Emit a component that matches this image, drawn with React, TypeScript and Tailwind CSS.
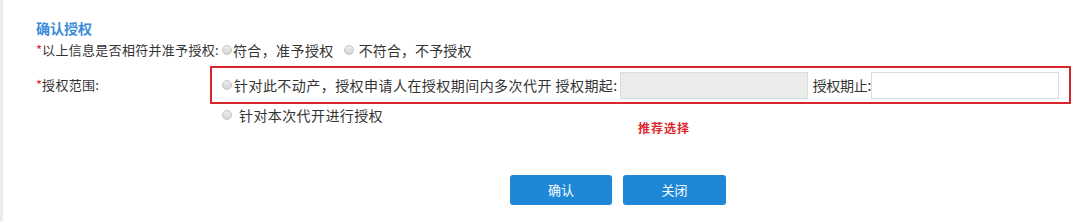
import React from 'react';

const Radio: React.FC<{ className?: string }> = ({ className = '' }) => (
  <span
    className={`inline-block w-[10px] h-[10px] rounded-full border border-[#c4c4c4] bg-gradient-to-b from-[#eeeeee] to-[#d6d6d6] shrink-0 ${className}`}
  />
);

const App: React.FC = () => {
  return (
    <div
      className="w-[1080px] h-[221px] bg-white border-l-[3px] border-[#ececec] text-[#333] overflow-hidden"
      style={{ fontFamily: '"Noto Sans CJK SC", "Noto Sans", sans-serif' }}
    >
      <div className="pl-[33px] pt-[18px]">
        {/* 标题 */}
        <div className="h-[20px] leading-[20px] text-[14px] font-bold text-[#3b8bd8]">确认授权</div>

        {/* 是否相符 */}
        <div className="mt-[2px] h-[20px] flex items-center text-[13px]">
          <span className="text-[#e0262d]">*</span>
          <span className="tracking-[0.3px]">以上信息是否相符并准予授权:</span>
          <Radio className="ml-[3px]" />
          <span className="ml-[1px] text-[14px] tracking-[0.4px]">符合，准予授权</span>
          <Radio className="ml-[10px]" />
          <span className="ml-[5px] text-[14px] tracking-[0.1px]">不符合，不予授权</span>
        </div>

        {/* 授权范围 */}
        <div className="mt-[6px] flex items-center">
          <div className="w-[174px] text-[13px]">
            <span className="text-[#e0262d]">*</span>
            <span className="tracking-[0.3px]">授权范围:</span>
          </div>
          <div className="w-[861px] h-[38px] border-2 border-[#d7262d] flex items-center pl-[10px] pr-[10px] text-[14px]">
            <Radio />
            <span className="ml-[2px] tracking-[0.45px] whitespace-nowrap">针对此不动产，授权申请人在授权期间内多次代开 授权期起:</span>
            <div className="ml-[2px] w-[188px] h-[27px] bg-[#ebebea] border border-[#dcdcdc]" />
            <span className="ml-[5px] whitespace-nowrap tracking-[-0.3px]">授权期止:</span>
            <div className="flex-1 h-[27px] bg-white border border-[#d6dde4]" />
          </div>
        </div>

        {/* 本次代开 */}
        <div className="mt-[1px] flex items-start">
          <div className="w-[174px]" />
          <div className="flex items-center h-[20px] pl-[12px] w-[428px]">
            <Radio />
            <span className="ml-[7px] text-[14px] tracking-[0.4px]">针对本次代开进行授权</span>
          </div>
          <div className="mt-[13px] h-[20px] leading-[20px] text-[12px] font-bold text-[#e0262d] tracking-[1px]">推荐选择</div>
        </div>

        {/* 按钮 */}
        <div className="mt-[37px] ml-[474px] flex gap-[11px]">
          <button className="w-[102px] h-[30px] rounded-[3px] bg-[#1e87d7] text-white text-[13px]">确认</button>
          <button className="w-[103px] h-[30px] rounded-[3px] bg-[#1e87d7] text-white text-[13px]">关闭</button>
        </div>
      </div>
    </div>
  );
};

export default App;
